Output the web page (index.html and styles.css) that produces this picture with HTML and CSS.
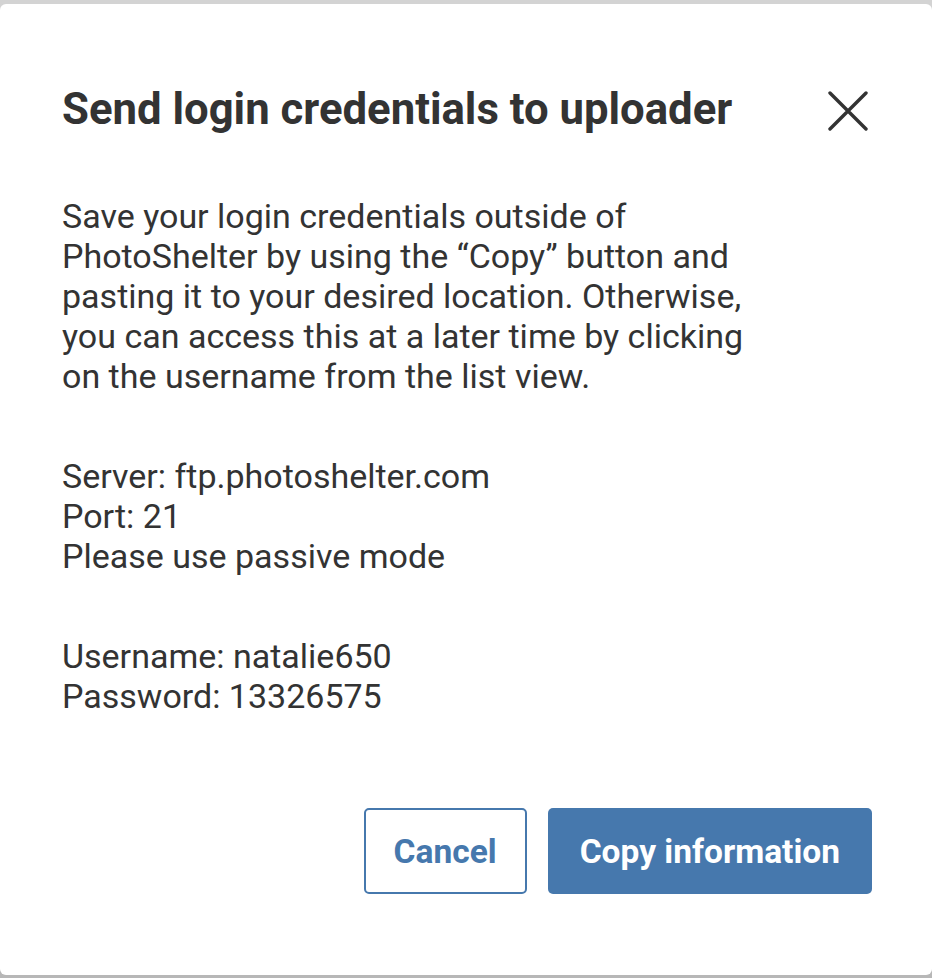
FILE: index.html
```html
<!DOCTYPE html>
<html>
<head>
<meta charset="utf-8">
<link rel="stylesheet" href="styles.css">
</head>
<body>
<div class="dialog">
  <div class="header">
    <h1 class="title">Send login credentials to uploader</h1>
    <button class="close" aria-label="Close">
      <svg width="40" height="40" viewBox="0 0 40 40"><path d="M2 2 L38 38 M38 2 L2 38" stroke="#333" stroke-width="3.4" stroke-linecap="round" fill="none"/></svg>
    </button>
  </div>
  <p class="text intro">Save your login credentials outside of PhotoShelter by using the “Copy” button and pasting it to your desired location. Otherwise, you can access this at a later time by clicking on the username from the list view.</p>
  <p class="text block">Server: ftp.photoshelter.com<br>Port: 21<br>Please use passive mode</p>
  <p class="text block">Username: natalie650<br>Password: 13326575</p>
  <div class="actions">
    <button class="btn btn-outline">Cancel</button>
    <button class="btn btn-primary">Copy information</button>
  </div>
</div>
</body>
</html>
```
FILE: styles.css
```css
html, body {
  margin: 0;
  padding: 0;
}
body {
  background: linear-gradient(to bottom, #d3d3d3 0, #d3d3d3 50%, #b7b7b7 50%, #b7b7b7 100%);
  height: 978px;
  overflow: hidden;
  font-family: Roboto, "Liberation Sans", sans-serif;
  color: #333;
}
.dialog {
  margin-top: 4px;
  height: 971px;
  box-sizing: border-box;
  background: #fff;
  border-radius: 6px;
  padding: 85px 64px 0 62px;
}
.header {
  display: flex;
  align-items: center;
  justify-content: space-between;
  height: 40px;
}
.title {
  margin: 0;
  font-size: 43.7px;
  font-weight: 700;
  line-height: 40px;
  color: #333;
}
.close {
  background: none;
  border: 0;
  padding: 0;
  width: 40px;
  height: 40px;
  margin-top: 3px;
  cursor: pointer;
}
.close svg { display: block; }
.text {
  margin: 0;
  font-size: 34px;
  line-height: 40px;
  color: #333;
}
.intro {
  margin-top: 67px;
  max-width: 700px;
}
.block {
  margin-top: 60px;
}
.actions {
  display: flex;
  justify-content: flex-end;
  gap: 21px;
  margin-top: 92px;
  margin-right: -4px;
}
.btn {
  height: 86px;
  box-sizing: border-box;
  border-radius: 5px;
  font-family: Roboto, "Liberation Sans", sans-serif;
  font-size: 33.5px;
  font-weight: 700;
  cursor: pointer;
}
.btn-outline {
  background: #fff;
  border: 2px solid #4678ad;
  color: #4678ad;
  padding: 0 28px;
}
.btn-primary {
  background: #4678ad;
  border: 0;
  color: #fff;
  padding: 0 32px;
}
```
